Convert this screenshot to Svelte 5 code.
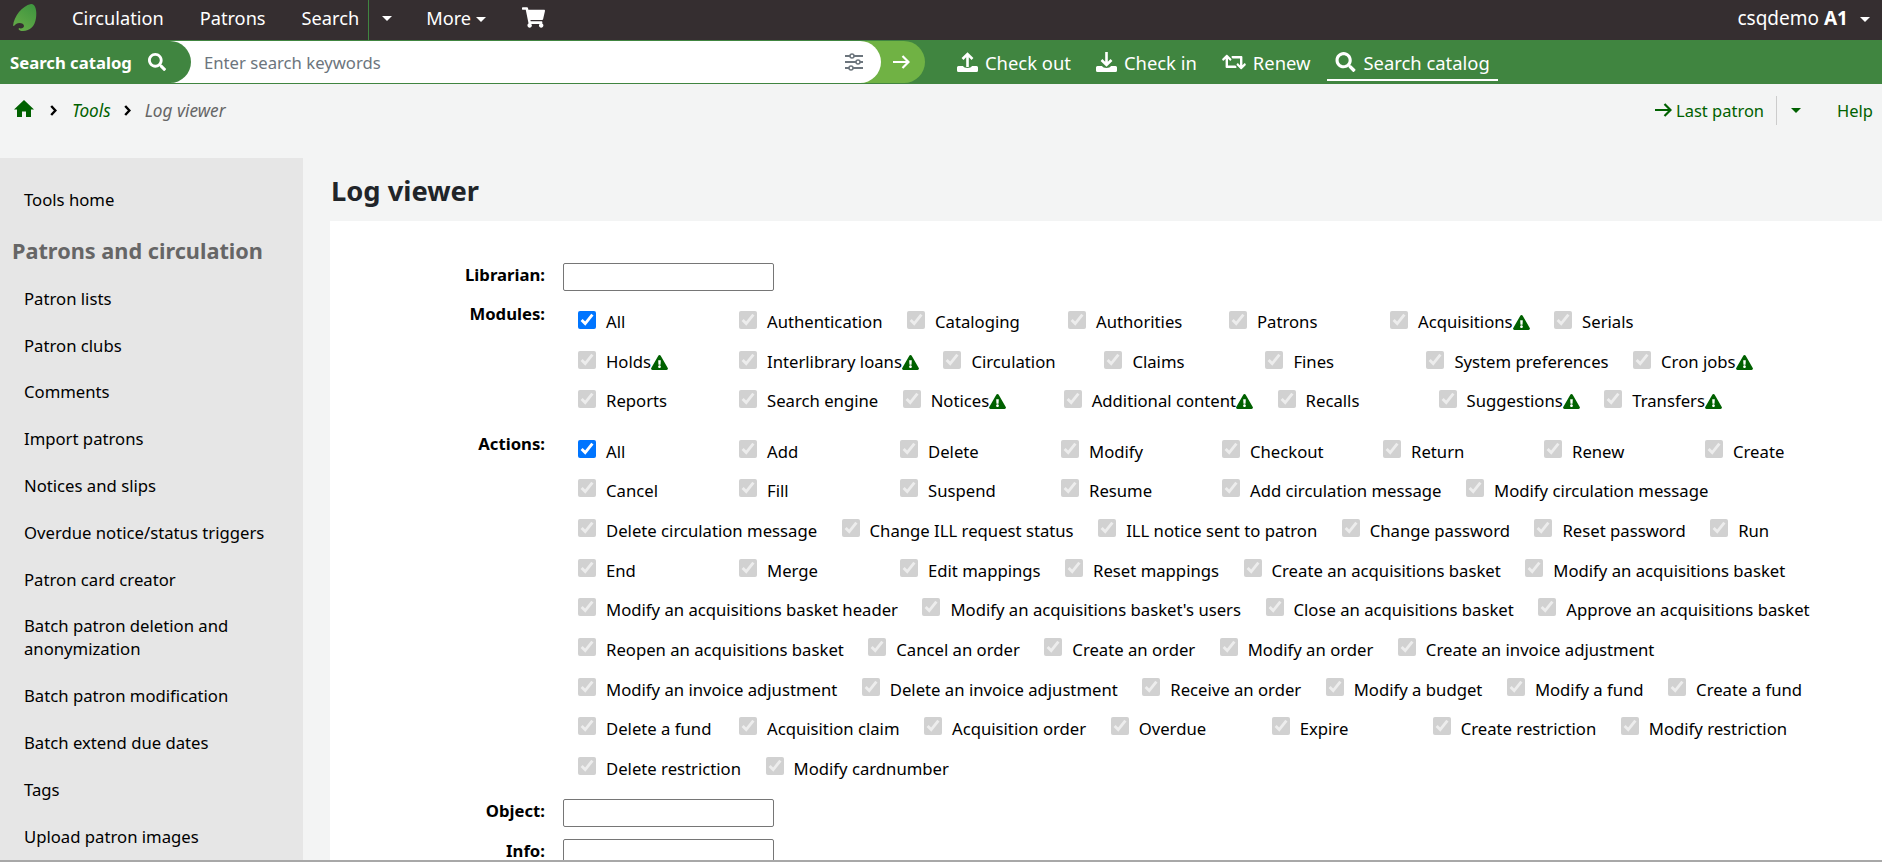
<script>
	const sideLinks = [
		'Patron lists',
		'Patron clubs',
		'Comments',
		'Import patrons',
		'Notices and slips',
		'Overdue notice/status triggers',
		'Patron card creator',
		'Batch patron deletion and anonymization',
		'Batch patron modification',
		'Batch extend due dates',
		'Tags',
		'Upload patron images'
	];

	// a trailing ! marks the labels that carry the warning triangle
	const modules = [
		['All', 'Authentication', 'Cataloging', 'Authorities', 'Patrons', 'Acquisitions!', 'Serials'],
		['Holds!', 'Interlibrary loans!', 'Circulation', 'Claims', 'Fines', 'System preferences', 'Cron jobs!'],
		['Reports', 'Search engine', 'Notices!', 'Additional content!', 'Recalls', 'Suggestions!', 'Transfers!']
	];

	const actions = [
		['All', 'Add', 'Delete', 'Modify', 'Checkout', 'Return', 'Renew', 'Create'],
		['Cancel', 'Fill', 'Suspend', 'Resume', 'Add circulation message', 'Modify circulation message'],
		['Delete circulation message', 'Change ILL request status', 'ILL notice sent to patron', 'Change password', 'Reset password', 'Run'],
		['End', 'Merge', 'Edit mappings', 'Reset mappings', 'Create an acquisitions basket', 'Modify an acquisitions basket'],
		['Modify an acquisitions basket header', "Modify an acquisitions basket's users", 'Close an acquisitions basket', 'Approve an acquisitions basket'],
		['Reopen an acquisitions basket', 'Cancel an order', 'Create an order', 'Modify an order', 'Create an invoice adjustment'],
		['Modify an invoice adjustment', 'Delete an invoice adjustment', 'Receive an order', 'Modify a budget', 'Modify a fund', 'Create a fund'],
		['Delete a fund', 'Acquisition claim', 'Acquisition order', 'Overdue', 'Expire', 'Create restriction', 'Modify restriction'],
		['Delete restriction', 'Modify cardnumber']
	];

	const searchPath = 'M505 442.7L405.3 343c-4.5-4.5-10.6-7-17-7H372c27.6-35.3 44-79.7 44-128C416 93.1 322.9 0 208 0S0 93.1 0 208s93.1 208 208 208c48.3 0 92.7-16.4 128-44v16.3c0 6.4 2.5 12.5 7 17l99.7 99.7c9.4 9.4 24.6 9.4 33.9 0l28.3-28.3c9.4-9.4 9.4-24.6.1-34zM208 336c-70.7 0-128-57.2-128-128 0-70.7 57.2-128 128-128 70.7 0 128 57.2 128 128 0 70.7-57.2 128-128 128z';
	const warnPath = 'M569.517 440.013C587.975 472.007 564.806 512 527.94 512H48.054c-36.937 0-59.999-40.055-41.577-71.987L246.423 23.985c18.467-32.009 64.72-31.951 83.154 0l239.94 416.028zM288 354c-25.405 0-46 20.595-46 46s20.595 46 46 46 46-20.595 46-46-20.595-46-46-46zm-43.673-165.346l7.418 136c.347 6.364 5.609 11.346 11.982 11.346h48.546c6.373 0 11.635-4.982 11.982-11.346l7.418-136c.375-6.874-5.098-12.654-11.982-12.654h-63.383c-6.884 0-12.356 5.78-11.981 12.654z';
	const trayPath = 'M1.5 14H6C7 16.5 14 16.5 15 14H19.5A1.5 1.5 0 0 1 21 15.5V18.5A1.5 1.5 0 0 1 19.5 20H1.5A1.5 1.5 0 0 1 0 18.5V15.5A1.5 1.5 0 0 1 1.5 14Z';
</script>

{#snippet checks(rows)}
	<div class="checks">
		{#each rows as row}
			<div class="check-row">
				{#each row as item}
					<label class="check">
						<input type="checkbox" checked disabled={item !== 'All'} />
						<span>{item.replace('!', '')}</span>
						{#if item.endsWith('!')}
							<svg class="warn" viewBox="0 0 576 512"><path d={warnPath} /></svg>
						{/if}
					</label>
				{/each}
			</div>
		{/each}
	</div>
{/snippet}

<div class="page">
	<nav class="topbar">
		<svg class="logo" viewBox="0 0 24 28">
			<defs>
				<linearGradient id="leaf" x1="0.8" y1="0" x2="0.2" y2="1">
					<stop offset="0" stop-color="#3f953f" />
					<stop offset="1" stop-color="#66ab48" />
				</linearGradient>
			</defs>
			<path
				fill="url(#leaf)"
				d="M0 22C1 12 9 2 18 0C23 0 24 8 23 14C22 22 17 27 10 27C6 27 5 25 6 24C8 25 11 24 11 22C11 19 6 18 3 20C2 21 1 22 0 22Z"
			/>
		</svg>
		<a class="nav circulation">Circulation</a>
		<a class="nav patrons">Patrons</a>
		<a class="nav search">Search</a>
		<span class="split"><i class="caret"></i></span>
		<a class="nav more">More<i class="caret"></i></a>
		<svg class="cart" viewBox="0 0 576 512">
			<path
				d="M528.12 301.319l47.273-208C578.806 78.301 567.391 64 551.99 64H159.208l-9.166-44.81C147.758 8.021 137.93 0 126.529 0H24C10.745 0 0 10.745 0 24v16c0 13.255 10.745 24 24 24h69.883l70.248 343.435C147.325 417.1 136 435.222 136 456c0 30.928 25.072 56 56 56s56-25.072 56-56c0-15.674-6.447-29.835-16.824-40h209.647C430.447 426.165 424 440.326 424 456c0 30.928 25.072 56 56 56s56-25.072 56-56c0-22.172-12.888-41.332-31.579-50.405l5.517-24.276c3.413-15.018-8.002-29.319-23.403-29.319H218.117l-6.545-32h293.145c11.206 0 20.92-7.754 23.403-18.681z"
			/>
		</svg>
		<div class="user">csqdemo <b>A1</b><i class="caret"></i></div>
	</nav>

	<div class="searchbar">
		<div class="search-box">
			<div class="input-box">
				<div class="tab">
					<b>Search catalog</b>
					<svg class="ico-search" viewBox="0 0 512 512"><path d={searchPath} /></svg>
				</div>
				<span class="placeholder">Enter search keywords</span>
				<svg class="sliders" viewBox="0 0 18 18">
					<g fill="none" stroke="#6c757d" stroke-width="2">
						<path d="M0 3H18M0 9H18M0 15H18" />
						<circle cx="7" cy="3" r="2" fill="#fff" stroke-width="1.5" />
						<circle cx="13" cy="9" r="2" fill="#fff" stroke-width="1.5" />
						<circle cx="6" cy="15" r="2" fill="#fff" stroke-width="1.5" />
					</g>
				</svg>
			</div>
			<svg class="go" viewBox="0 0 17 14">
				<path d="M0 7H15.5M9.5 1L15.5 7L9.5 13" fill="none" stroke="#fff" stroke-width="2.2" />
			</svg>
		</div>
		<div class="actions">
			<a class="action">
				<svg viewBox="0 0 21 20">
					<path d="M10.5 15V2M5.5 7L10.5 2L15.5 7" fill="none" stroke="#fff" stroke-width="2.6" />
					<path d={trayPath} />
				</svg>
				Check out
			</a>
			<a class="action">
				<svg viewBox="0 0 21 20">
					<path d="M10.5 0V13M5.5 8L10.5 13L15.5 8" fill="none" stroke="#fff" stroke-width="2.6" />
					<path d={trayPath} />
				</svg>
				Check in
			</a>
			<a class="action">
				<svg class="wide" viewBox="0 0 640 512">
					<path
						d="M629.657 343.598L528.971 444.284c-9.373 9.372-24.568 9.372-33.941 0L394.343 343.598c-9.373-9.373-9.373-24.569 0-33.941l10.823-10.823c9.562-9.562 25.133-9.312 34.391.553L480 342.941V160H292.451a24.005 24.005 0 0 1-16.971-7.029l-16-16C244.361 121.851 255.069 96 276.451 96H520c13.255 0 24 10.745 24 24v222.941l40.444-43.554c9.258-9.864 24.829-10.115 34.391-.553l10.823 10.823c9.372 9.372 9.372 24.568-.001 33.941zm-265.138 15.431A23.999 23.999 0 0 0 347.548 352H160V169.059l40.444 43.554c9.258 9.865 24.829 10.115 34.391.553l10.823-10.823c9.373-9.373 9.373-24.569 0-33.941L144.971 67.716c-9.373-9.373-24.569-9.373-33.941 0L10.343 168.402c-9.373 9.373-9.373 24.569 0 33.941l10.823 10.823c9.562 9.562 25.133 9.312 34.391-.553L96 169.059V392c0 13.255 10.745 24 24 24h243.549c21.382 0 32.09-25.851 16.971-40.971l-16.001-16z"
					/>
				</svg>
				Renew
			</a>
			<a class="action active">
				<svg viewBox="0 0 512 512"><path d={searchPath} /></svg>
				Search catalog
			</a>
		</div>
	</div>

	<div class="crumbs">
		<svg class="home" viewBox="0 0 20 17">
			<path d="M10 0L20 9.5H17V17H12V11.5H8V17H3V9.5H0Z" />
		</svg>
		<svg class="sep" viewBox="0 0 7 11"><path d="M1.2 1L5.4 5.5L1.2 10" /></svg>
		<a class="crumb-link">Tools</a>
		<svg class="sep second" viewBox="0 0 7 11"><path d="M1.2 1L5.4 5.5L1.2 10" /></svg>
		<span class="crumb-here">Log viewer</span>
		<div class="crumb-right">
			<svg class="last-arrow" viewBox="0 0 17 14">
				<path d="M0 7H15.5M9.5 1L15.5 7L9.5 13" fill="none" stroke="#006100" stroke-width="2.2" />
			</svg>
			<a>Last patron</a>
			<span class="crumb-split"><i class="caret dark"></i></span>
			<a>Help</a>
		</div>
	</div>

	<div class="main">
		<aside class="sidebar">
			<a class="side-link">Tools home</a>
			<h5>Patrons and circulation</h5>
			{#each sideLinks as link}
				<a class="side-link">{link}</a>
			{/each}
		</aside>

		<section class="content">
			<h1>Log viewer</h1>
			<form class="panel">
				<div class="field">
					<span class="field-label">Librarian:</span>
					<input class="text" type="text" />
				</div>
				<div class="field tight">
					<span class="field-label up">Modules:</span>
					{@render checks(modules)}
				</div>
				<div class="field after">
					<span class="field-label down">Actions:</span>
					{@render checks(actions)}
				</div>
				<div class="field">
					<span class="field-label">Object:</span>
					<input class="text" type="text" />
				</div>
				<div class="field">
					<span class="field-label">Info:</span>
					<input class="text" type="text" />
				</div>
			</form>
		</section>
	</div>
</div>

<style>
	:global(body) {
		margin: 0;
		background: #f3f4f4;
		font-family: 'Noto Sans', sans-serif;
		font-size: 16.7px;
		color: #000;
	}

	.page {
		height: 860px;
		overflow: hidden;
		border-bottom: 2px solid #a8a8a8;
	}

	/* Top bar */
	.topbar {
		display: flex;
		align-items: center;
		height: 40px;
		background: #352e30;
		color: #fff;
		font-size: 18.2px;
	}

	.logo {
		width: 24px;
		height: 28px;
		margin-left: 13px;
		margin-top: -4px;
	}

	.nav {
		margin-top: -5px;
		white-space: nowrap;
	}

	.circulation {
		margin-left: 35px;
	}

	.patrons {
		margin-left: 36px;
	}

	.search {
		margin-left: 36px;
	}

	.split {
		display: flex;
		align-items: center;
		height: 40px;
		margin-left: 9px;
		padding-left: 13px;
		border-left: 1px solid #408540;
	}

	.split .caret {
		margin-top: -4px;
	}

	.more {
		margin-left: 34px;
	}

	.caret {
		display: inline-block;
		width: 0;
		height: 0;
		border-left: 5px solid transparent;
		border-right: 5px solid transparent;
		border-top: 5px solid #fff;
		vertical-align: 3px;
	}

	.caret.dark {
		border-top-color: #006100;
	}

	.more .caret {
		margin-left: 5px;
	}

	.cart {
		width: 23px;
		height: 21px;
		margin-left: 36px;
		margin-top: -5px;
		fill: #fff;
	}

	.user {
		margin-left: auto;
		margin-right: 12px;
		margin-top: -5px;
		font-size: 19px;
		white-space: nowrap;
	}

	.user .caret {
		margin-left: 12px;
	}

	/* Search bar */
	.searchbar {
		display: flex;
		align-items: stretch;
		height: 44px;
		padding: 1px 0;
		box-sizing: border-box;
		background: #408540;
	}

	.search-box {
		display: flex;
		align-items: center;
		width: 925px;
		background: #70b244;
		border-radius: 0 22px 22px 0;
	}

	.input-box {
		display: flex;
		align-items: center;
		width: 881px;
		height: 100%;
		background: #fff;
		border-radius: 0 22px 22px 0;
	}

	.tab {
		display: flex;
		align-items: center;
		width: 191px;
		height: 100%;
		padding-left: 10px;
		box-sizing: border-box;
		background: #408540;
		border-radius: 0 22px 22px 0;
		color: #fff;
		white-space: nowrap;
	}

	.ico-search {
		width: 18px;
		height: 18px;
		margin-left: 16px;
		fill: #fff;
	}

	.placeholder {
		margin-left: 13px;
		color: #6c757d;
	}

	.sliders {
		width: 18px;
		height: 18px;
		margin-left: auto;
		margin-right: 18px;
	}

	.go {
		width: 17px;
		height: 14px;
		margin-left: 12px;
	}

	.actions {
		display: flex;
		align-items: center;
		margin-left: 24px;
		color: #fff;
		font-size: 18.4px;
	}

	.action {
		display: flex;
		align-items: center;
		gap: 7px;
		height: 34px;
		margin-right: 9px;
		padding: 0 8px;
		white-space: nowrap;
	}

	.action svg {
		width: 21px;
		height: 20px;
		fill: #fff;
	}

	.action svg.wide {
		width: 24px;
	}

	.action.active {
		border-bottom: 2px solid #fff;
		margin-top: 2px;
	}

	/* Breadcrumbs */
	.crumbs {
		display: flex;
		align-items: center;
		height: 74px;
		padding: 0 9px 22px 14px;
		box-sizing: border-box;
	}

	.home {
		width: 20px;
		height: 17px;
		margin-top: -3px;
		fill: #006100;
	}

	.sep {
		flex: none;
		width: 7px;
		height: 11px;
		margin: 0 15px 0 16px;
		fill: none;
		stroke: #000;
		stroke-width: 2.4;
	}

	.sep.second {
		margin: 0 14px 0 13px;
	}

	.crumb-link {
		color: #006100;
		font-size: 17.2px;
		font-style: italic;
	}

	.crumb-here {
		color: #666;
		font-size: 17.2px;
		font-style: italic;
	}

	.crumb-right {
		display: flex;
		align-items: center;
		margin-left: auto;
		font-size: 16.5px;
		color: #006100;
	}

	.last-arrow {
		width: 17px;
		height: 14px;
		margin-right: 4px;
	}

	.crumb-split {
		display: flex;
		align-items: center;
		height: 29px;
		margin: 0 36px 0 12px;
		padding-left: 14px;
		border-left: 1px solid #ccc;
	}

	/* Main */
	.main {
		display: flex;
		align-items: flex-start;
	}

	.sidebar {
		flex: none;
		display: flex;
		flex-direction: column;
		width: 303px;
		height: 704px;
		padding-top: 30px;
		box-sizing: border-box;
		background: #e6e6e6;
	}

	.side-link {
		padding: 0 24px 23.8px;
		line-height: 23px;
	}

	h5 {
		margin: 4px 0 24px;
		padding-left: 12px;
		color: #666;
		font-size: 21.7px;
		font-weight: 700;
		line-height: 24px;
	}

	.content {
		flex: 1;
		min-width: 0;
		margin-left: 27px;
	}

	h1 {
		margin: 0;
		height: 63px;
		padding-left: 1px;
		font-size: 27.3px;
		font-weight: 700;
		line-height: 66px;
		color: #212529;
	}

	.panel {
		padding-top: 42px;
		background: #fff;
	}

	.field {
		display: flex;
		align-items: flex-start;
		margin-bottom: 12px;
	}

	.field.tight {
		margin-bottom: 9.5px;
	}

	.field.after {
		margin-bottom: 10.5px;
	}

	.field-label {
		flex: none;
		width: 215px;
		margin-right: 18px;
		font-weight: 700;
		line-height: 24px;
		text-align: right;
	}

	.field-label.up {
		margin-top: -1px;
	}

	.field-label.down {
		margin-top: 0.5px;
	}

	.text {
		width: 211px;
		height: 28px;
		box-sizing: border-box;
		margin: 0;
		border: 1px solid #767676;
		border-radius: 2px;
		background: #fff;
	}

	.checks {
		padding-left: 15px;
	}

	.check-row {
		display: flex;
		height: 39.7px;
	}

	.check {
		display: flex;
		align-items: flex-start;
		box-sizing: border-box;
		min-width: 161px;
		padding: 8px 24.5px 0 0;
		line-height: 23px;
		white-space: nowrap;
	}

	.tight .check span {
		margin-top: -1px;
	}

	.check input {
		flex: none;
		width: 18px;
		height: 18px;
		margin: 0 10px 0 0;
	}

	.warn {
		width: 17px;
		height: 15px;
		margin-top: 4px;
		fill: #006100;
	}
</style>
